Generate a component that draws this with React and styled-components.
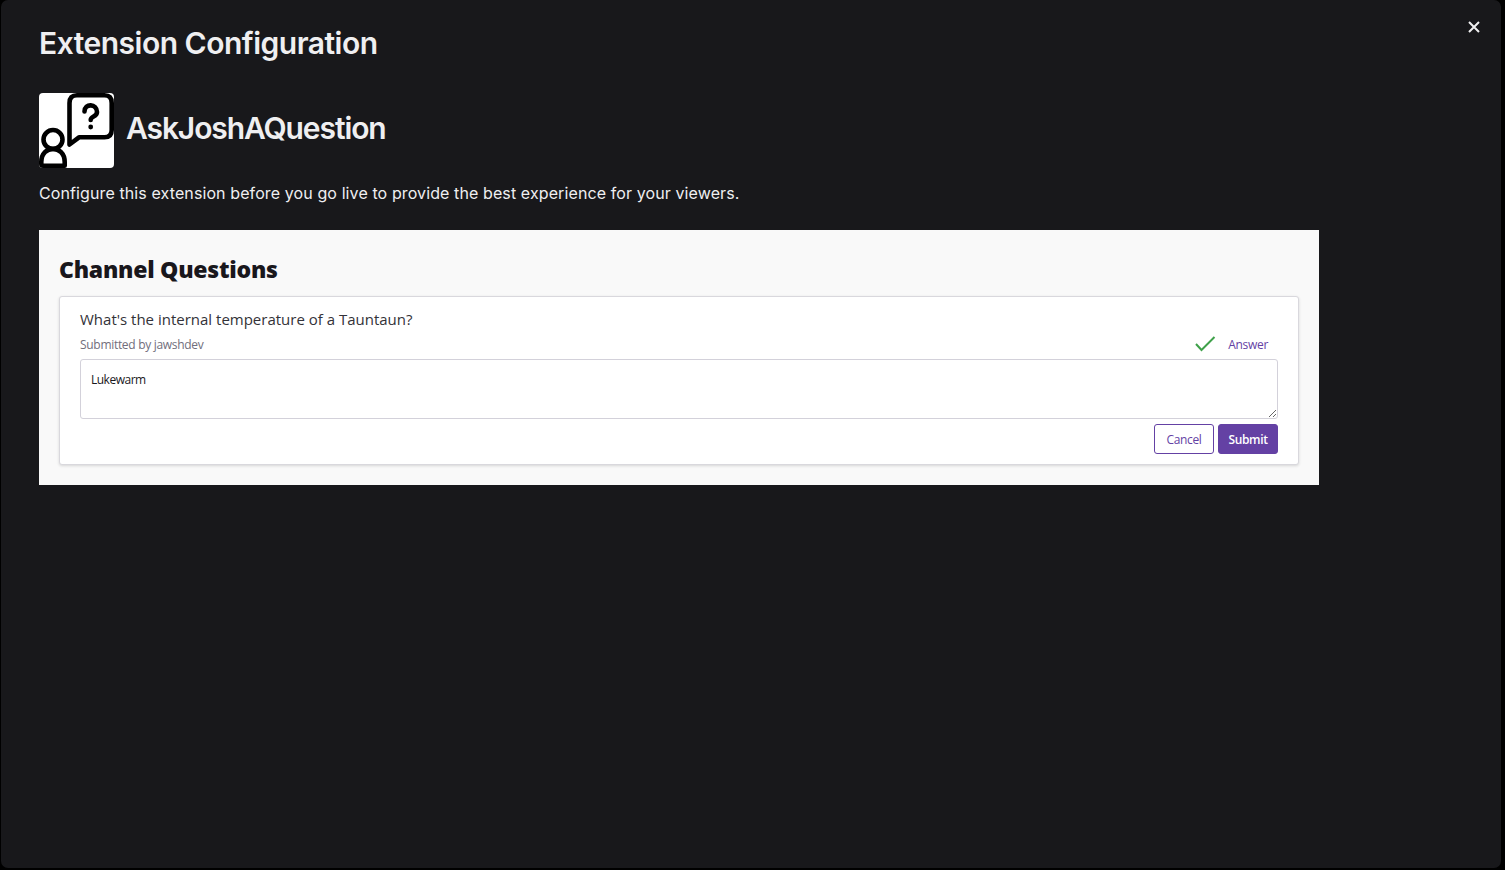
import React from "react";
import styled, { createGlobalStyle } from "styled-components";

const GlobalStyle = createGlobalStyle`
  * { box-sizing: border-box; }
  html, body { margin: 0; height: 100%; background: #000; overflow: hidden; }
  h1, h2, h3, p { margin: 0; }
`;

const Modal = styled.main`
  position: relative;
  width: 1500px;
  height: 868px;
  margin-left: 1px;
  padding: 24px 38px 0;
  display: flex;
  flex-direction: column;
  align-items: flex-start;
  border-radius: 7px;
  background: #18181b;
  color: #efeff1;
  font-family: Inter, "Liberation Sans", sans-serif;
`;

const CloseButton = styled.button`
  position: absolute;
  top: 12px;
  right: 12px;
  width: 30px;
  height: 30px;
  padding: 0;
  display: grid;
  place-items: center;
  border: 0;
  background: none;
  color: #efeff1;
`;

const Title = styled.h1`
  font-size: 30px;
  font-weight: 600;
  line-height: 38px;
  letter-spacing: ${(p) => p.$spacing}px;
  white-space: nowrap;
`;

const ExtensionName = styled(Title)`
  padding-bottom: 6px;
`;

const ExtensionHeader = styled.header`
  display: flex;
  align-items: center;
  gap: 12px;
  margin-top: 31px;
`;

const Logo = styled.svg`
  display: block;
  width: 75px;
  height: 75px;
  border-radius: 4px;
  background: #fff;
`;

const Description = styled.p`
  margin-top: 13px;
  font-size: 16px;
  line-height: 24px;
  letter-spacing: 0.105px;
  white-space: nowrap;
`;

const ConfigFrame = styled.section`
  width: 1280px;
  height: 255px;
  margin-top: 25px;
  padding: 20px;
  background: #f9f9f9;
  color: #19171c;
  font-family: "Open Sans", "Noto Sans", sans-serif;
`;

const FrameTitle = styled.h2`
  font-size: 23px;
  font-weight: 800;
  line-height: 38px;
  letter-spacing: -0.25px;
  height: 46px;
`;

const Card = styled.article`
  height: 169px;
  padding: 10px 20px;
  border: 1px solid #d9d8dd;
  border-radius: 3px;
  background: #fff;
  box-shadow: 0 1px 3px rgba(0, 0, 0, 0.14);
`;

const Question = styled.h3`
  height: 26px;
  font-size: 15px;
  font-weight: 400;
  line-height: 24px;
  letter-spacing: 0;
  color: #333238;
`;

const MetaRow = styled.div`
  display: flex;
  align-items: center;
  justify-content: space-between;
  height: 26px;
  padding-bottom: 4px;
  font-size: 12px;
  letter-spacing: -0.3px;
`;

const Submitter = styled.span`
  color: #716e7c;
`;

const AnswerGroup = styled.div`
  display: flex;
  align-items: center;
  gap: 12px;
  padding-right: 10px;
`;

const AnswerLink = styled.a`
  color: #6441a4;
`;

const AnswerBox = styled.textarea`
  display: block;
  width: 100%;
  height: 60px;
  padding: 10px;
  border: 1px solid #d3d1da;
  border-radius: 3px;
  outline: 0;
  background: #fff;
  color: #19171c;
  font: 12px/20px "Open Sans", "Noto Sans", sans-serif;
  letter-spacing: -0.5px;
  resize: vertical;
`;

const Actions = styled.div`
  display: flex;
  justify-content: flex-end;
  gap: 4px;
  margin-top: 5px;
`;

const Button = styled.button`
  width: 60px;
  height: 30px;
  padding: 2px 0 0;
  border: 1px solid #6441a4;
  border-radius: 3px;
  background: ${(p) => (p.$primary ? "#6441a4" : "#fff")};
  color: ${(p) => (p.$primary ? "#fff" : "#6441a4")};
  font: ${(p) => (p.$primary ? 600 : 400)} 12px/26px "Open Sans", "Noto Sans", sans-serif;
  letter-spacing: -0.35px;
`;

function QuestionLogo() {
  return (
    <Logo viewBox="0 0 75 75" fill="none" stroke="#000" strokeWidth="4.600" strokeLinejoin="round" strokeLinecap="round">
      <path d="M30.500 51.500V10Q30.500 2.300 38 2.300H65.500Q72.700 2.300 72.700 10V37Q72.700 44.300 65.500 44.300H40Z" />
      <path d="M45.500 18.500C45.500 10 58 10.500 58 19C58 24 51.700 23 51.700 27" />
      <circle cx="51.700" cy="34" r="2.400" fill="#000" stroke="none" />
      <circle cx="14" cy="46.500" r="9.500" />
      <path d="M2.300 72.700V69C2.300 51.500 25.700 51.500 25.700 69V72.700Z" />
    </Logo>
  );
}

export default function App() {
  return (
    <>
      <GlobalStyle />
      <Modal>
        <CloseButton aria-label="Close">
          <svg width="12" height="12" viewBox="0 0 12 12" stroke="currentColor" strokeWidth="2" fill="none">
            <path d="M1 1L11 11M11 1L1 11" />
          </svg>
        </CloseButton>
        <Title $spacing={-0.5}>Extension Configuration</Title>
        <ExtensionHeader>
          <QuestionLogo />
          <ExtensionName as="h2" $spacing={-1.1}>AskJoshAQuestion</ExtensionName>
        </ExtensionHeader>
        <Description>
          Configure this extension before you go live to provide the best experience for your viewers.
        </Description>
        <ConfigFrame>
          <FrameTitle>Channel Questions</FrameTitle>
          <Card>
            <Question>What's the internal temperature of a Tauntaun?</Question>
            <MetaRow>
              <Submitter>Submitted by jawshdev</Submitter>
              <AnswerGroup>
                <svg width="22" height="18" viewBox="0 0 22 18" fill="none" stroke="#3fa14a" strokeWidth="2">
                  <path d="M2 9L7.500 15L20.500 2" />
                </svg>
                <AnswerLink>Answer</AnswerLink>
              </AnswerGroup>
            </MetaRow>
            <AnswerBox defaultValue="Lukewarm" spellCheck={false} />
            <Actions>
              <Button>Cancel</Button>
              <Button $primary>Submit</Button>
            </Actions>
          </Card>
        </ConfigFrame>
      </Modal>
    </>
  );
}
